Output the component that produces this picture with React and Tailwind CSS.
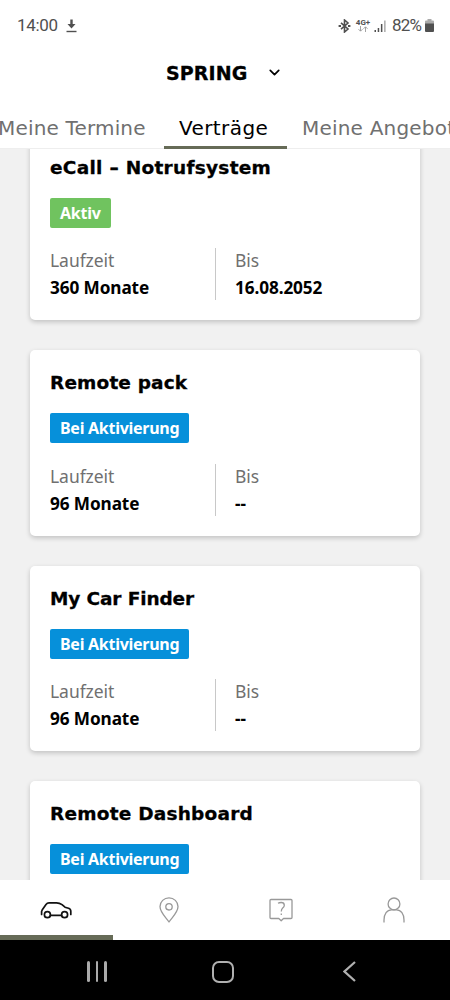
import { ChevronDown } from 'lucide-react'

const contracts = [
  { title: 'eCall – Notrufsystem', spacing: 'tracking-[0.28px]', status: 'Aktiv', duration: '360 Monate', until: '16.08.2052' },
  { title: 'Remote pack', spacing: 'tracking-[0.15px]', status: 'Bei Aktivierung', duration: '96 Monate', until: '--' },
  { title: 'My Car Finder', spacing: 'tracking-[-0.12px]', status: 'Bei Aktivierung', duration: '96 Monate', until: '--' },
  { title: 'Remote Dashboard', spacing: 'tracking-[0.22px]', status: 'Bei Aktivierung', duration: '96 Monate', until: '--' },
]

function StatusBar() {
  return (
    <div className="flex h-[51px] items-center pl-[17px] pr-[16px] font-[Roboto,sans-serif] text-[17px] text-[#505050]">
      <span className="w-[41px] whitespace-nowrap tracking-[-0.3px]">14:00</span>
      <svg className="ml-[8px] h-[14px] w-[11px]" viewBox="0 0 11 14" fill="none" stroke="#505050">
        <path d="M5.5 0.5v7" strokeWidth="2.4" />
        <path d="M1.5 5h8L5.5 9.5z" fill="#505050" stroke="none" />
        <path d="M0.5 12.5h10" strokeWidth="1.4" />
      </svg>
      <div className="ml-auto flex items-center">
        <svg className="h-[14px] w-[13px]" viewBox="0 0 13 14" fill="none" stroke="#505050" strokeWidth="1.6">
          <path d="M3 3.8l7 6.2-3.5 3V1l3.5 3-7 6.2" />
          <path d="M0.6 7h2.4M10 7h2.4" strokeWidth="2" />
        </svg>
        <div className="ml-[5px] flex w-[14px] flex-col items-center">
          <span className="text-[8px] font-bold leading-[7px]">4G+</span>
          <svg className="h-[6px] w-[10px]" viewBox="0 0 10 6" fill="none" stroke="#999" strokeWidth="0.9">
            <path d="M2.5 0v5M0.5 3.2l2 2 2-2M7.5 6V1M5.5 2.8l2-2 2 2" />
          </svg>
        </div>
        <svg className="ml-[4px] h-[12px] w-[12px]" viewBox="0 0 12 12" fill="#505050">
          <path d="M0.5 10h1.5v2H0.5zM3.7 8h1.5v4H3.7zM6.9 4h1.5v8H6.9z" />
          <path d="M10.1 0.5h1.5V12h-1.5z" fill="#aaa" />
        </svg>
        <span className="ml-[6px] w-[32px] whitespace-nowrap tracking-[-0.8px]">82%</span>
        <svg className="ml-px h-[13px] w-[9px]" viewBox="0 0 9 13">
          <path d="M2.5 0h4v1.5H8q1 0 1 1V5H0V2.5q0-1 1-1h1.5z" fill="#aaa" />
          <path d="M0 4.5h9V12q0 1-1 1H1q-1 0-1-1z" fill="#505050" />
        </svg>
      </div>
    </div>
  )
}

function Tabs() {
  return (
    <div className="flex h-[41px] border-b border-[#eeeeee] text-[20px] leading-[40px] text-[#707070]">
      <div className="w-[164px] whitespace-nowrap tracking-[0.17px]">
        <span className="-ml-[2px]">Meine Termine</span>
      </div>
      <div className="h-[41px] w-[123px] border-b-[3px] border-[#666b57] pl-[15px] tracking-[0.4px] text-black">
        Verträge
      </div>
      <div className="min-w-0 flex-1 overflow-hidden whitespace-nowrap pl-[15px] tracking-[0.2px]">Meine Angebote</div>
    </div>
  )
}

function Field({ label, value }) {
  return (
    <div className="whitespace-nowrap">
      <div className="text-[17.5px] leading-[25px] tracking-[-0.05px] text-[#707070]">{label}</div>
      <div className="mt-[3px] text-[17.2px] font-bold leading-[24px] tracking-[-0.1px] text-black">{value}</div>
    </div>
  )
}

function ContractCard({ contract }) {
  const active = contract.status === 'Aktiv'

  return (
    <div className="h-[185.5px] shrink-0 rounded-[5px] bg-white px-[20px] pt-[20px] shadow-[0_2px_5px_rgba(0,0,0,0.2)]">
      <h2
        className={`whitespace-nowrap font-['DejaVu_Sans',sans-serif] text-[18.5px] font-bold leading-[26px] text-black [-webkit-text-stroke:0.3px_black] ${contract.spacing}`}
      >
        {contract.title}
      </h2>
      <div
        className={`mt-[17px] h-[30px] whitespace-nowrap rounded-[2px] pl-[10px] text-[16px] font-bold leading-[30px] tracking-[-0.27px] text-white ${
          active ? 'w-[61px] bg-[#70c35f]' : 'w-[139px] bg-[#0690da]'
        }`}
      >
        {contract.status}
      </div>
      <div className="mt-[20.5px] flex h-[52px]">
        <div className="w-[166px] border-r border-[#c8c8c8]">
          <Field label="Laufzeit" value={contract.duration} />
        </div>
        <div className="pl-[19px]">
          <Field label="Bis" value={contract.until} />
        </div>
      </div>
    </div>
  )
}

function BottomNav() {
  return (
    <nav className="flex h-[60px] bg-white">
      <div className="flex w-1/4 justify-center border-b-[5px] border-[#666b57] pt-[21px]">
        <svg className="h-[18px] w-[32px]" viewBox="0 0 32 18" fill="none" stroke="#111" strokeWidth="1.7" strokeLinecap="round" strokeLinejoin="round">
          <path d="M1.6 13.5V10.5L2.3 8.7 6 3.4Q7.2 1.8 9 1.8h7.5Q19.5 1.8 22 3.6L25 6.2l3.5 1.1q2.3.8 2.3 3v3.2M10.5 14.4H21.5" />
          <circle cx="7.4" cy="13.7" r="3" />
          <circle cx="24.6" cy="13.7" r="3" />
        </svg>
      </div>
      <div className="flex w-1/4 justify-center pt-[17px]">
        <svg className="h-[26px] w-[20px]" viewBox="0 0 20 26" fill="none" stroke="#999" strokeWidth="1.3" strokeLinejoin="round">
          <path d="M10 25C7 20.5 1 15.5 1 9.6a9 8.8 0 0 1 18 0C19 15.5 13 20.5 10 25z" />
          <circle cx="10" cy="9.8" r="3.2" />
        </svg>
      </div>
      <div className="flex w-1/4 justify-center pt-[18px]">
        <svg className="h-[24px] w-[24px]" viewBox="0 0 24 24" fill="none" stroke="#999" strokeWidth="1.3" strokeLinejoin="round">
          <path d="M2 1.5h20q1 0 1 1v17q0 1-1 1h-7.5L12.2 22.8 9.8 20.5H2q-1 0-1-1v-17q0-1 1-1z" />
          <path d="M9 5.2q1.2-.7 3.2-.7 3.1 0 3.1 2.7 0 1.5-1.6 2.9-1.4 1.3-1.4 3.5M12.3 15.5v1.5" />
        </svg>
      </div>
      <div className="flex w-1/4 justify-center pt-[17px]">
        <svg className="h-[26px] w-[22px]" viewBox="0 0 22 26" fill="none" stroke="#999" strokeWidth="1.3">
          <circle cx="11" cy="6.9" r="5.9" />
          <path d="M1 25.5v-2.5C1 17 4 12.8 8.5 12.8h5C18 12.8 21 17 21 23v2.5" />
        </svg>
      </div>
    </nav>
  )
}

function SystemBar() {
  return (
    <div className="flex h-[60px] items-center bg-black pl-[34px] pt-[3px]">
      <div className="flex w-[126px] justify-center gap-[6px]">
        <div className="h-[21px] w-[2.5px] rounded-full bg-[#aaaaaa]" />
        <div className="h-[21px] w-[2.5px] rounded-full bg-[#aaaaaa]" />
        <div className="h-[21px] w-[2.5px] rounded-full bg-[#aaaaaa]" />
      </div>
      <div className="flex w-[126px] justify-center">
        <div className="h-[22px] w-[22px] rounded-[7px] border-2 border-[#b0b0b0]" />
      </div>
      <div className="flex w-[126px] justify-center">
        <svg className="h-[21px] w-[13px]" viewBox="0 0 13 21" fill="none" stroke="#b0b0b0" strokeWidth="2.2">
          <path d="M12 1L1.5 10.5l10.5 9.5" />
        </svg>
      </div>
    </div>
  )
}

export default function App() {
  return (
    <div className="flex h-[1000px] w-[450px] flex-col overflow-hidden bg-[#f1f1f1] font-['Noto_Sans',sans-serif]">
      <header className="bg-white font-['DejaVu_Sans',sans-serif]">
        <StatusBar />
        <div className="flex h-[57px] items-center pb-[13px] pl-[166px] text-black">
          <span className="w-[83px] whitespace-nowrap text-[19px] font-bold tracking-[0.1px] [-webkit-text-stroke:0.3px_black]">SPRING</span>
          <ChevronDown className="-mt-[2px] ml-[17px]" size={17} strokeWidth={2.4} />
        </div>
        <Tabs />
      </header>
      <main className="flex min-h-0 flex-1 flex-col overflow-hidden px-[30px]">
        <div className="-mt-[14.5px] flex flex-col gap-[30px]">
          {contracts.map((contract) => (
            <ContractCard key={contract.title} contract={contract} />
          ))}
        </div>
      </main>
      <BottomNav />
      <SystemBar />
    </div>
  )
}
